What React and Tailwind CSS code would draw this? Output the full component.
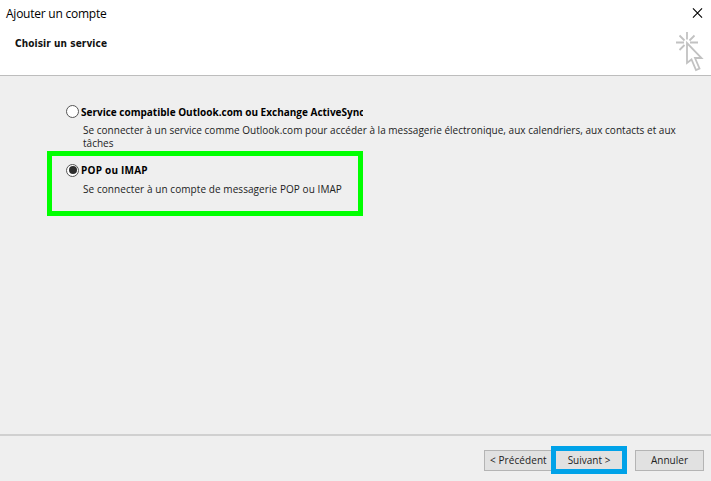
function WizardCursor() {
  return (
    <svg width="32" height="44" viewBox="0 0 32 44" fill="none" stroke="#c2c2c2" strokeWidth="1.8">
      <path d="M12 1v7.500M1 11.500h8M15 11.500h8M4.500 4.500l5 5M19.500 4.500l-5 5M9.500 14l-5 5" />
      <path d="M12 12v20l4.500-3.500 4.500 10.500 3.500-1.500-4.500-10.500h6.500z" fill="#fff" />
    </svg>
  );
}

function Radio({ checked }) {
  return (
    <span className="flex h-[13px] w-[13px] shrink-0 items-center justify-center rounded-full border border-[#555] bg-white">
      {checked && <span className="h-[8px] w-[8px] rounded-full bg-[#2e2e2e]" />}
    </span>
  );
}

export default function App() {
  return (
    <div className="flex h-[481px] w-[711px] flex-col overflow-hidden bg-[#efefef] font-['Open_Sans','Noto_Sans',sans-serif] text-[#222]">
      <header className="flex h-[76px] shrink-0 justify-between border-b border-[#bdbdbd] bg-white">
        <div className="whitespace-nowrap pt-[5px]">
          <h1 className="pl-[6px] text-[12px] leading-[18px] tracking-[-0.24px] text-black">Ajouter un compte</h1>
          <h2 className="pl-[15px] pt-[14px] font-['DejaVu_Sans_Condensed','DejaVu_Sans',sans-serif] text-[10px] font-bold leading-[14px] tracking-[0.09px] text-[#111]">
            Choisir un service
          </h2>
        </div>
        <div className="flex flex-col items-end pt-[8px]">
          <svg className="mr-[8px]" width="11" height="11" viewBox="0 0 11 11" stroke="#000" strokeWidth="1.2">
            <path d="M.5.5l10 10M10.500.5l-10 10" />
          </svg>
          <div className="mr-[4px] mt-[13px]"><WizardCursor /></div>
        </div>
      </header>

      <main className="relative flex-1 pl-[66px] pt-[27px]">
        <div className="flex h-[16px] items-center gap-[2px]">
          <Radio />
          <span className="w-[282px] overflow-hidden whitespace-nowrap pt-px text-[10px] font-bold leading-[16px] text-black">
            Service compatible Outlook.com ou Exchange ActiveSync
          </span>
        </div>
        <p className="whitespace-nowrap pl-[17px] pt-[5px] text-[10px] leading-[13px] tracking-[0.02px]">
          Se connecter à un service comme Outlook.com pour accéder à la messagerie électronique, aux calendriers, aux contacts et aux
          <br />
          tâches
        </p>
        <div className="mt-[12px] flex h-[16px] items-center gap-[2px]">
          <Radio checked />
          <span className="whitespace-nowrap text-[10px] font-bold leading-[16px] tracking-[0.22px] text-black">POP ou IMAP</span>
        </div>
        <p className="whitespace-nowrap pl-[17px] pt-[5px] text-[10px] leading-[13px] tracking-[0.07px]">
          Se connecter à un compte de messagerie POP ou IMAP
        </p>
        <div className="absolute left-[47px] top-[75px] h-[65px] w-[316px] border-[5px] border-[#00ff00]" />
      </main>

      <footer className="flex h-[47px] shrink-0 border-t-2 border-[#d0d0d0] pl-[484px] pt-[14px] text-[10px]">
        <button className="h-[21px] w-[67px] whitespace-nowrap border border-r-0 border-[#b4b4b4] bg-[#e1e1e1] pl-[5px] text-left leading-[19px] tracking-[0.08px]">
          &lt; Précédent
        </button>
        <button className="-mt-[4px] h-[28px] w-[76px] whitespace-nowrap border-[5px] border-[#00a2e8] bg-[#e1e1e1] leading-[18px]">
          Suivant &gt;
        </button>
        <button className="ml-[8px] h-[21px] w-[69px] whitespace-nowrap border border-[#b4b4b4] bg-[#e1e1e1] leading-[19px]">
          Annuler
        </button>
      </footer>
    </div>
  );
}
